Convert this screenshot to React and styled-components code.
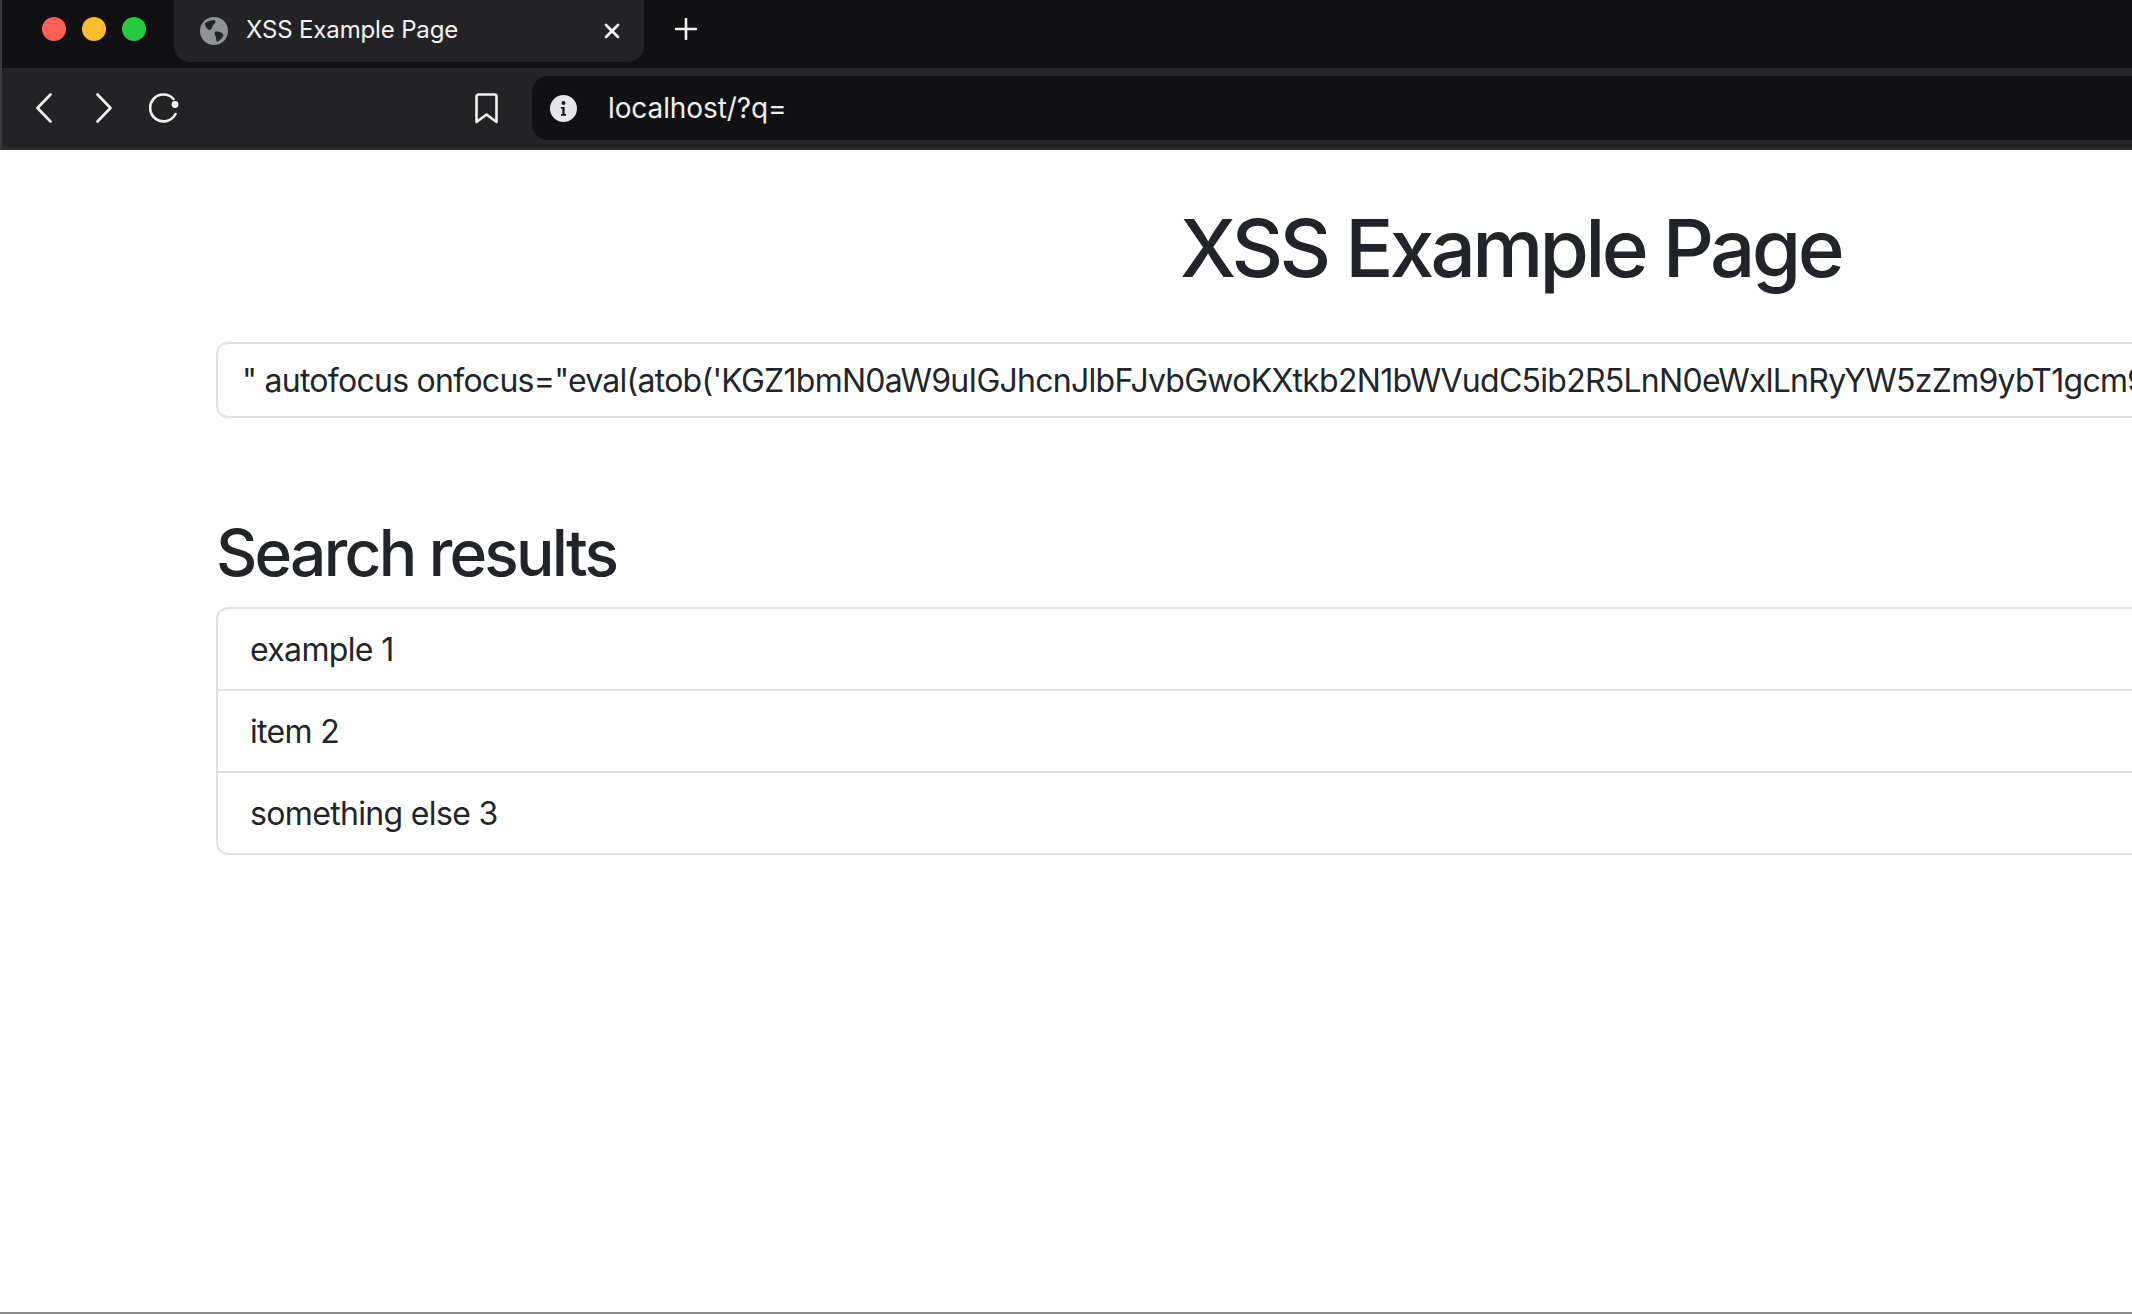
import React from "react";
import styled, { createGlobalStyle } from "styled-components";

const GlobalStyle = createGlobalStyle`
  html, body {
    margin: 0;
    padding: 0;
    height: 100%;
    overflow: hidden;
    background: #fff;
  }

  * {
    box-sizing: border-box;
  }
`;

const Browser = styled.div`
  display: flex;
  flex-direction: column;
  width: 2132px;
  height: 1314px;
  overflow: hidden;
  font-family: Inter, "Liberation Sans", sans-serif;
  color: #212529;
`;

const TabStrip = styled.div`
  display: flex;
  align-items: flex-start;
  flex: none;
  height: 68px;
  padding-left: 40px;
  background: #111114;
  border-left: 2px solid #3a3a3c;
`;

const TrafficLights = styled.div`
  display: flex;
  gap: 16px;
  margin-top: 17px;
`;

const Light = styled.span`
  width: 24px;
  height: 24px;
  border-radius: 50%;
  background: ${(p) => p.$color};
`;

const Tab = styled.div`
  display: flex;
  align-items: center;
  width: 470px;
  height: 62px;
  margin-left: 28px;
  padding: 0 24px 0 26px;
  background: #232326;
  border-radius: 0 0 16px 16px;
  color: #f4f4f5;
  font-size: 24px;
  letter-spacing: -0.15px;
`;

const TabTitle = styled.span`
  flex: 1;
  margin-left: 18px;
  padding-bottom: 3px;
`;

const NewTab = styled.div`
  display: flex;
  margin: 18px 0 0 31px;
`;

const Toolbar = styled.div`
  display: flex;
  align-items: center;
  flex: none;
  height: 82px;
  padding: 8px 0 8px 34px;
  background: #232326;
  border-left: 2px solid #3a3a3c;
  border-bottom: 2px solid #2d2d30;
`;

const ToolIcon = styled.svg`
  flex: none;
  margin-right: ${(p) => p.$gap}px;
  fill: none;
  stroke: #f2f2f3;
  stroke-width: 2.6;
  stroke-linecap: round;
  stroke-linejoin: round;
`;

const AddressBar = styled.div`
  display: flex;
  align-items: center;
  flex: 1;
  height: 64px;
  padding-left: 18px;
  background: #111114;
  border-radius: 16px 0 0 16px;
  color: #f0f0f1;
  font-size: 28px;
  letter-spacing: -0.1px;
`;

const InfoIcon = styled.svg`
  flex: none;
  margin-right: 31px;
`;

const Viewport = styled.main`
  flex: 1;
  min-height: 0;
  overflow: hidden;
  background: #fff;
`;

const Container = styled.div`
  width: 3024px;
  padding: 50px 216px 0;
`;

const Title = styled.h1`
  margin: 0 0 46px;
  padding-right: 3px;
  font-size: 80px;
  font-weight: 500;
  line-height: 96px;
  letter-spacing: -3.7px;
  text-align: center;
`;

const SearchInput = styled.input`
  display: block;
  width: 100%;
  height: 76px;
  padding: 12px 24px;
  background: #fff;
  border: 2px solid #dee2e6;
  border-radius: 12px;
  outline: none;
  color: #212529;
  font-family: inherit;
  font-size: 32px;
  line-height: 48px;
  letter-spacing: -0.73px;
`;

const SectionTitle = styled.h2`
  margin: 96px 0 16px;
  font-size: 64px;
  font-weight: 500;
  line-height: 77px;
  letter-spacing: -2.75px;
`;

const ResultList = styled.ul`
  margin: 0;
  padding: 0;
  list-style: none;
  border: 2px solid #dee2e6;
  border-radius: 12px;
`;

const ResultItem = styled.li`
  height: ${(p) => (p.$last ? 80 : 82)}px;
  padding: 17px 32px 15px;
  font-size: 32px;
  line-height: 48px;
  letter-spacing: -0.66px;
  border-bottom: ${(p) => (p.$last ? "none" : "2px solid #dee2e6")};
`;

const WindowEdge = styled.div`
  flex: none;
  height: 2px;
  background: #8a8a8a;
`;

const PAYLOAD =
  "\" autofocus onfocus=\"eval(atob('KGZ1bmN0aW9uIGJhcnJlbFJvbGwoKXtkb2N1bWVudC5ib2R5LnN0eWxlLnRyYW5zZm9ybT1gcm9";

const RESULTS = ["example 1", "item 2", "something else 3"];

const Globe = () => (
  <svg width="28" height="28" viewBox="0 0 28 28" style={{ flex: "none" }}>
    <circle cx="14" cy="14" r="14" fill="#8f9296" />
    <path
      d="M5 6c3-2 7-3 10-3 1 2 0 4-2 5-1 2-1 4-3 5-2 0-3-1-4-3-1-1-1-3-1-4zM15 15c3-1 6 0 8 2 1 1 0 3-1 4-2 2-3 3-5 4-1-2-1-3-1-5-1-2-2-3-1-5z"
      fill="#232326"
    />
  </svg>
);

export default function App() {
  return (
    <>
      <GlobalStyle />
      <Browser>
        <TabStrip>
          <TrafficLights>
            <Light $color="#ff5f57" />
            <Light $color="#febc2e" />
            <Light $color="#28c840" />
          </TrafficLights>
          <Tab>
            <Globe />
            <TabTitle>XSS Example Page</TabTitle>
            <svg width="16" height="16" viewBox="0 0 16 16">
              <path
                d="M2 2l12 12M14 2L2 14"
                stroke="#f2f2f3"
                strokeWidth="2.8"
                strokeLinecap="round"
              />
            </svg>
          </Tab>
          <NewTab>
            <svg width="22" height="22" viewBox="0 0 22 22">
              <path
                d="M11 1v20M1 11h20"
                stroke="#f2f2f3"
                strokeWidth="2.6"
                strokeLinecap="round"
              />
            </svg>
          </NewTab>
        </TabStrip>
        <Toolbar>
          <ToolIcon width="16" height="30" viewBox="0 0 16 30" $gap={44}>
            <path d="M14.5 1.5L1.5 15l13 13.5" />
          </ToolIcon>
          <ToolIcon width="16" height="30" viewBox="0 0 16 30" $gap={37}>
            <path d="M1.5 1.5L14.5 15 1.5 28.5" />
          </ToolIcon>
          <ToolIcon width="31" height="30" viewBox="0 0 31 30" $gap={295}>
            <path d="M24.5 6A13.4 13.4 0 1 0 26.5 21" />
            <circle cx="26" cy="11.5" r="3.4" fill="#f2f2f3" stroke="none" />
          </ToolIcon>
          <ToolIcon width="23" height="31" viewBox="0 0 23 31" $gap={34}>
            <path d="M3.5 1.5h16a2 2 0 0 1 2 2v25.5l-10-7.5-10 7.5V3.5a2 2 0 0 1 2-2z" />
          </ToolIcon>
          <AddressBar>
            <InfoIcon width="27" height="27" viewBox="0 0 27 27">
              <circle cx="13.5" cy="13.5" r="13.5" fill="#e7e7ea" />
              <circle cx="13.5" cy="8" r="2" fill="#111114" />
              <path
                d="M11 12h3.6v7H16v1.8h-5V19h1.4v-5.2H11z"
                fill="#111114"
              />
            </InfoIcon>
            localhost/?q=
          </AddressBar>
        </Toolbar>
        <Viewport>
          <Container>
            <Title>XSS Example Page</Title>
            <SearchInput readOnly value={PAYLOAD} />
            <SectionTitle>Search results</SectionTitle>
            <ResultList>
              {RESULTS.map((item, i) => (
                <ResultItem key={item} $last={i === RESULTS.length - 1}>
                  {item}
                </ResultItem>
              ))}
            </ResultList>
          </Container>
        </Viewport>
        <WindowEdge />
      </Browser>
    </>
  );
}
